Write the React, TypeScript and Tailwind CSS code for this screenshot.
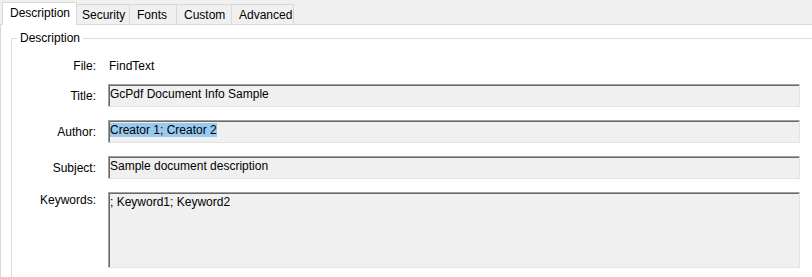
import React from "react";

const tabs = [
  { label: "Security", w: "w-[53px]", pl: "pl-[5px]" },
  { label: "Fonts", w: "w-[47px]", pl: "pl-[7px]" },
  { label: "Custom", w: "w-[55px]", pl: "pl-[7px]" },
  { label: "Advanced", w: "w-[62px]", pl: "pl-[7px]" },
];

// champ en lecture seule, bord "enfonce" facon Win32
function Field({ children, tall }: { children: React.ReactNode; tall?: boolean }) {
  return (
    <div
      className={`w-[692px] ${tall ? "h-[76px]" : "h-[23px]"} border border-t-[#a0a0a0] border-l-[#a0a0a0] border-r-[#e3e3e3] border-b-[#e3e3e3] bg-[#f0f0f0] pl-[1px] leading-[16px] shadow-[inset_1px_1px_0_#696969] pt-[1px]`}
    >
      {children}
    </div>
  );
}

function Row({
  label,
  children,
  top,
  className,
}: {
  label: string;
  children: React.ReactNode;
  top?: boolean;
  className?: string;
}) {
  return (
    <div className={`flex gap-[12px] ${top ? "items-start" : "items-center"} ${className ?? ""}`}>
      <span className={`w-[79px] text-right leading-[14px] ${top ? "pt-[1px]" : ""}`}>{label}</span>
      {children}
    </div>
  );
}

export default function App() {
  return (
    <div className="h-[277px] w-[812px] overflow-hidden bg-[#f0f0f0] font-['Liberation_Sans',Arial,sans-serif] text-[12px] text-black">
      <div className="flex h-[24px] items-end pl-[2px]">
        <div className="relative z-10 -mb-px h-[23px] w-[75px] border-x border-t border-[#d9d9d9] bg-white pl-[7px] pt-[3px] leading-[14px]">
          Description
        </div>
        {tabs.map((t) => (
          <div
            key={t.label}
            className={`h-[20px] ${t.w} ${t.pl} border-t border-r border-[#d9d9d9] pt-[3px] leading-[14px]`}
          >
            {t.label}
          </div>
        ))}
      </div>
      <div className="h-[253px] border-t border-l border-[#d9d9d9] bg-white pt-[6px] pl-[10px]">
        <fieldset className="w-[820px] border border-[#dcdcdc] pl-[5px]">
          <legend className="px-[3px] leading-[14px]">Description</legend>
          <div className="flex flex-col">
            <Row label="File:" className="mt-[9px] h-[23px]">
              <span className="pl-[1px]">FindText</span>
            </Row>
            <Row label="Title:" className="mt-[7px]">
              <Field>GcPdf Document Info Sample</Field>
            </Row>
            <Row label="Author:" className="mt-[13px]">
              <Field>
                <span className="bg-[#99c9ef]">Creator 1; Creator 2</span>
              </Field>
            </Row>
            <Row label="Subject:" className="mt-[13px]">
              <Field>Sample document description</Field>
            </Row>
            <Row label="Keywords:" top className="mt-[13px] mb-[20px]">
              <Field tall>; Keyword1; Keyword2</Field>
            </Row>
          </div>
        </fieldset>
      </div>
    </div>
  );
}
